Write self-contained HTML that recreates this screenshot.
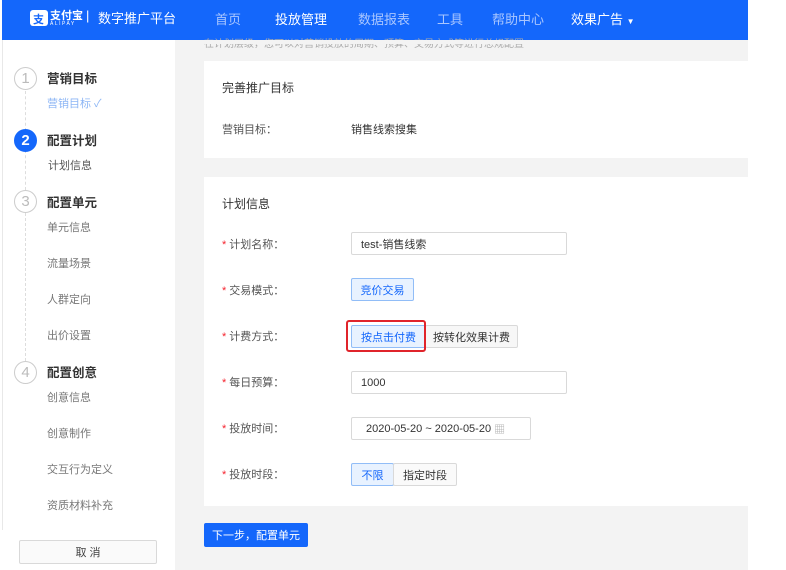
<!DOCTYPE html>
<html><head><meta charset="utf-8"><style>
*{margin:0;padding:0;box-sizing:border-box}
body{width:786px;height:570px;background:#fff;position:relative;overflow:hidden;font-family:"Liberation Sans","Noto Sans CJK SC",sans-serif;color:#333}
.a{position:absolute;white-space:nowrap}
#hd{left:2px;top:0;width:746px;height:40px;background:#1467fb}
.nav{top:9px;font-size:13px;color:#a9c6ff}
#side{left:2px;top:40px;width:173px;height:490px;background:#fff;border-left:1px solid #e8e8e8}
#main{left:175px;top:40px;width:573px;height:530px;background:#f3f3f3}
.card{background:#fff}
.circ{width:23px;height:23px;border-radius:50%;border:1px solid #ccc;color:#bbb;font-size:15px;text-align:center;line-height:21px}
.st{font-size:12.5px;font-weight:bold;color:#333}
.sub{font-size:11px;color:#777}
.lbl{font-size:11px;color:#555}
.lbl b{color:#f5222d;font-weight:normal;margin-right:3px}
.inp{border:1px solid #d9d9d9;border-radius:2px;background:#fff;font-size:11px;color:#333;height:23px;display:flex;align-items:center;padding-left:9px}
.btn{border:1px solid #d9d9d9;border-radius:2px;background:#f7f7f7;font-size:11px;color:#333;height:23px;display:flex;align-items:center;justify-content:center}
.on{border-color:#91bdf7;background:#e8f2ff;color:#1467fb}
.dash{border-left:1px dashed #ddd;width:0}
</style></head><body>
<div class="a" id="hd"></div>
<div class="a" style="left:30px;top:10px;width:18px;height:16px;background:#fff;border-radius:3px"></div>
<div class="a" style="left:33px;top:11px;font-size:11px;color:#1467fb;font-weight:bold">支</div>
<div class="a" style="left:50px;top:7px;font-size:11px;color:#fff;font-weight:bold">支付宝</div>
<div class="a" style="left:50px;top:21px;font-size:5px;color:#fff;letter-spacing:1.5px">ALIPAY</div>
<div class="a" style="left:86px;top:8px;font-size:13px;color:#fff">|</div>
<div class="a" style="left:98px;top:8px;font-size:13px;color:#fff">数字推广平台</div>
<div class="a nav" style="left:215px">首页</div>
<div class="a nav" style="left:275px;color:#fff">投放管理</div>
<div class="a nav" style="left:358px">数据报表</div>
<div class="a nav" style="left:437px">工具</div>
<div class="a nav" style="left:492px">帮助中心</div>
<div class="a nav" style="left:571px;color:#fff">效果广告 <span style="font-size:8px">▼</span></div>

<div class="a" id="side"></div>
<div class="a dash" style="left:25px;top:91px;height:40px"></div>
<div class="a dash" style="left:25px;top:150px;height:40px"></div>
<div class="a dash" style="left:25px;top:213px;height:148px"></div>
<div class="a circ" style="left:14px;top:67px">1</div>
<div class="a st" style="left:47px;top:68px">营销目标</div>
<div class="a sub" style="left:47px;top:95px;color:#8db6f5">营销目标 ✓</div>
<div class="a circ" style="left:14px;top:129px;background:#1467fb;border-color:#1467fb;color:#fff;font-weight:bold">2</div>
<div class="a st" style="left:47px;top:130px">配置计划</div>
<div class="a sub" style="left:48px;top:157px;color:#555">计划信息</div>
<div class="a circ" style="left:14px;top:190px">3</div>
<div class="a st" style="left:47px;top:192px">配置单元</div>
<div class="a sub" style="left:47px;top:219px">单元信息</div>
<div class="a sub" style="left:47px;top:255px">流量场景</div>
<div class="a sub" style="left:47px;top:291px">人群定向</div>
<div class="a sub" style="left:47px;top:327px">出价设置</div>
<div class="a circ" style="left:14px;top:361px">4</div>
<div class="a st" style="left:47px;top:362px">配置创意</div>
<div class="a sub" style="left:47px;top:389px">创意信息</div>
<div class="a sub" style="left:47px;top:425px">创意制作</div>
<div class="a sub" style="left:47px;top:461px">交互行为定义</div>
<div class="a sub" style="left:47px;top:497px">资质材料补充</div>
<div class="a btn" style="left:19px;top:540px;width:138px;height:24px;background:#fafafa;color:#444">取 消</div>

<div class="a" id="main"></div>
<div class="a" style="left:204px;top:35px;font-size:10px;color:#aaa">在计划层级，您可以对营销投放的周期、预算、交易方式等进行总规配置</div>
<div class="a" style="left:175px;top:40px;width:573px;height:4px;background:#f3f3f3"></div>
<div class="a card" style="left:204px;top:61px;width:544px;height:97px"></div>
<div class="a" style="left:222px;top:79px;font-size:12px;color:#333">完善推广目标</div>
<div class="a lbl" style="left:222px;top:121px">营销目标：</div>
<div class="a lbl" style="left:351px;top:121px;color:#333">销售线索搜集</div>

<div class="a card" style="left:204px;top:177px;width:544px;height:329px"></div>
<div class="a" style="left:222px;top:195px;font-size:12px;color:#333">计划信息</div>
<div class="a lbl" style="left:222px;top:236px"><b>*</b>计划名称：</div>
<div class="a inp" style="left:351px;top:232px;width:216px">test-销售线索</div>
<div class="a lbl" style="left:222px;top:282px"><b>*</b>交易模式：</div>
<div class="a btn on" style="left:351px;top:278px;width:63px">竞价交易</div>
<div class="a lbl" style="left:222px;top:328px"><b>*</b>计费方式：</div>
<div class="a btn on" style="left:351px;top:325px;width:75px">按点击付费</div>
<div class="a btn" style="left:425px;top:325px;width:93px">按转化效果计费</div>
<div class="a" style="left:346px;top:320px;width:80px;height:32px;border:2px solid #e0242b;border-radius:3px"></div>
<div class="a lbl" style="left:222px;top:374px"><b>*</b>每日预算：</div>
<div class="a inp" style="left:351px;top:371px;width:216px">1000</div>
<div class="a lbl" style="left:222px;top:420px"><b>*</b>投放时间：</div>
<div class="a inp" style="left:351px;top:417px;width:180px;padding-left:14px">2020-05-20 ~ 2020-05-20&nbsp;<span style="color:#aaa">▦</span></div>
<div class="a lbl" style="left:222px;top:466px"><b>*</b>投放时段：</div>
<div class="a btn on" style="left:351px;top:463px;width:43px">不限</div>
<div class="a btn" style="left:393px;top:463px;width:64px;background:#fafafa">指定时段</div>

<div class="a" style="left:204px;top:523px;width:104px;height:24px;background:#1467fb;border-radius:2px;color:#fff;font-size:11px;display:flex;align-items:center;justify-content:center">下一步，配置单元</div>
</body></html>
